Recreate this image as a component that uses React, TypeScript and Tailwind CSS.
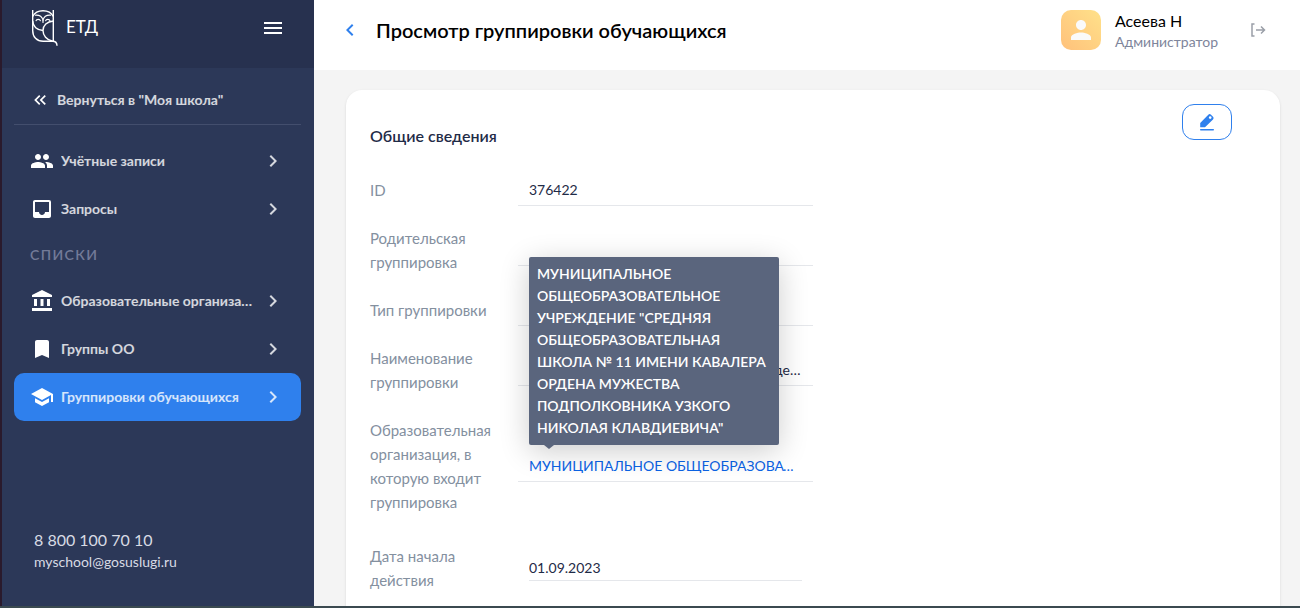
import type { ReactNode } from 'react';
import {
  MdAccountBalance,
  MdBookmark,
  MdInbox,
  MdKeyboardArrowLeft,
  MdKeyboardArrowRight,
  MdKeyboardDoubleArrowLeft,
  MdMenu,
  MdPeople,
  MdPerson,
  MdSchool,
} from 'react-icons/md';

const mainLinks = [
  { label: 'Учётные записи', icon: MdPeople },
  { label: 'Запросы', icon: MdInbox },
];

const listLinks = [
  { label: 'Образовательные организации', icon: MdAccountBalance },
  { label: 'Группы ОО', icon: MdBookmark },
  { label: 'Группировки обучающихся', icon: MdSchool, active: true },
];

const organization =
  'МУНИЦИПАЛЬНОЕ ОБЩЕОБРАЗОВАТЕЛЬНОЕ УЧРЕЖДЕНИЕ "СРЕДНЯЯ ОБЩЕОБРАЗОВАТЕЛЬНАЯ ШКОЛА № 11 ИМЕНИ КАВАЛЕРА ОРДЕНА МУЖЕСТВА ПОДПОЛКОВНИКА УЗКОГО НИКОЛАЯ КЛАВДИЕВИЧА"';

function OwlLogo() {
  return (
    <svg width="28" height="38" viewBox="0 0 28 38" fill="none" stroke="currentColor" strokeWidth="1.4" aria-hidden="true">
      <path d="M1.7 1v20.500c0 6.500 4 10.800 10.500 10.800h9.500c2.600 0 4.300 1.400 4.300 4.500" />
      <path d="M22.300 1v31" />
      <path d="M1.700 7.500C3.500 4 7 1.800 12 1.800S20.500 4 22.300 7.500" />
      <path d="M4 6.200c4-.4 7 1.300 8 4.800 1-3.500 4-5.200 8-4.800" strokeWidth="1.1" />
      <path d="M12 11v3M4.800 12.200c.8-2.400 4-2.400 4.800 0M14.400 12.200c.8-2.400 4-2.400 4.800 0" strokeWidth="1.1" />
      <path d="M1.700 12c.3 5.500 4.300 9.300 10.300 9.500" />
      <path d="M22.300 12C16 12.500 12 16.500 12 21.500c0 5 3.500 9.500 9.700 10.800" />
    </svg>
  );
}

function NavLink({ label, icon: Icon, active }: { label: string; icon: typeof MdPeople; active?: boolean }) {
  return (
    <a
      href="#"
      className={`flex h-12 items-center gap-[7px] rounded-[10px] px-4 text-sm font-bold text-white/80 ${
        active ? 'bg-[#2f80ed]' : ''
      }`}
    >
      <Icon size={24} className="shrink-0 text-white" />
      <span className="min-w-0 flex-1 truncate">{label}</span>
      <MdKeyboardArrowRight size={24} className="shrink-0" />
    </a>
  );
}

function Sidebar() {
  return (
    <aside className="flex w-[314px] shrink-0 flex-col border-l-2 border-[#2a1a2c] bg-[#2c3858] text-white">
      <div className="flex h-[68px] items-start justify-between bg-[#27314f] pr-[29px] pl-[29px]">
        <a href="#" className="flex items-start gap-[7px] pt-[9px]">
          <OwlLogo />
          <span className="pt-2 text-[17px] leading-5">ЕТД</span>
        </a>
        <button type="button" aria-label="Меню" className="mt-4">
          <MdMenu size={24} />
        </button>
      </div>

      <nav className="flex-1 pr-[13px] pl-3">
        <a href="#" className="mb-3 flex h-[57px] items-center gap-[7px] border-b border-[#434e6d] px-4 pt-2 text-sm font-bold text-white/80">
          <MdKeyboardDoubleArrowLeft size={20} className="text-white" />
          Вернуться в "Моя школа"
        </a>
        {mainLinks.map((link) => (
          <NavLink key={link.label} {...link} />
        ))}
        <h2 className="px-4 py-3 text-sm font-semibold tracking-widest text-[#737b98]">СПИСКИ</h2>
        {listLinks.map((link) => (
          <NavLink key={link.label} {...link} />
        ))}
      </nav>

      <address className="flex flex-col px-8 pb-[34px] text-[#d8dbe4] not-italic">
        <a href="tel:88001007010" className="text-base leading-6">8 800 100 70 10</a>
        <a href="mailto:myschool@gosuslugi.ru" className="text-sm">myschool@gosuslugi.ru</a>
      </address>
    </aside>
  );
}

function TopBar() {
  return (
    <header className="flex h-[70px] shrink-0 items-start bg-white pr-8 pl-6">
      <button type="button" aria-label="Назад" className="mt-[18px] text-[#2f80ed]">
        <MdKeyboardArrowLeft size={24} />
      </button>
      <h1 className="mt-4 ml-[14px] flex-1 text-xl leading-7 font-semibold text-black">Просмотр группировки обучающихся</h1>
      <div className="mt-[10px] flex size-10 items-center justify-center rounded-[10px] bg-linear-to-tr from-[#ffc17b] to-[#ffe18a]">
        <MdPerson size={30} className="text-[#fafafa]" />
      </div>
      <div className="mt-[10px] ml-[14px] min-w-[105px]">
        <div className="text-base leading-[21px] text-black">Асеева Н</div>
        <div className="text-sm leading-[21px] text-[#7e859b]">Администратор</div>
      </div>
      <button type="button" aria-label="Выйти" className="mt-[22px] ml-7 text-[#9a9fa8]">
        <svg width="20" height="16" viewBox="0 0 20 16" fill="none" stroke="currentColor" strokeWidth="1.5">
          <path d="M6.500 2H4v12h2.500M8 8h8.500M13 4.500 16.500 8 13 11.500" />
        </svg>
      </button>
    </header>
  );
}

function Field({ label, id, children }: { label: string; id: string; children: ReactNode }) {
  return (
    <div className="flex items-center">
      <label htmlFor={id} className="w-[148px] shrink-0 pr-5 text-[15px] leading-6 text-[#84909f]">
        {label}
      </label>
      {children}
    </div>
  );
}

function TextValue({ id, value }: { id: string; value: string }) {
  return (
    <input
      id={id}
      readOnly
      value={value}
      className="-my-1 h-8 w-[295px] truncate border-b border-[#e5e7eb] px-[11px] text-sm text-[#1f2b47]"
    />
  );
}

export default function App() {
  return (
    <div className="flex h-screen overflow-hidden border-b-2 border-[#3b4a50] bg-[#f4f4f4] font-[Lato,sans-serif]">
      <Sidebar />
      <div className="flex min-w-0 flex-1 flex-col">
        <TopBar />
        <main className="min-h-0 flex-1 overflow-hidden pt-5 pr-5 pl-8">
          <section className="min-h-full rounded-2xl bg-white px-6 pt-[14px] pb-10 shadow-sm">
            <div className="mb-[30px] flex items-start justify-between pr-6">
              <h2 className="mt-5 text-base leading-6 font-semibold text-[#1f2b47]">Общие сведения</h2>
              <button
                type="button"
                aria-label="Редактировать"
                className="flex h-9 w-[50px] items-center justify-center rounded-xl border border-[#2f80ed] text-[#2f80ed]"
              >
                <svg width="16" height="18" viewBox="0 0 16 18" fill="currentColor">
                  <path d="M1.200 10 9.300 1.700a1.900 1.900 0 0 1 2.700 0l2 2a1.900 1.900 0 0 1 0 2.700L6 14.200H1.200z" />
                  <circle cx="11.200" cy="4.600" r="1.300" fill="#fff" />
                  <rect x="1" y="16" width="14" height="1.400" rx=".7" />
                </svg>
              </button>
            </div>

            <div className="flex flex-col gap-6">
              <Field label="ID" id="group-id">
                <TextValue id="group-id" value="376422" />
              </Field>
              <Field label="Родительская группировка" id="parent">
                <TextValue id="parent" value="" />
              </Field>
              <Field label="Тип группировки" id="type">
                <TextValue id="type" value="" />
              </Field>
              <Field label="Наименование группировки" id="name">
                <TextValue id="name" value="Группировка обучающихся в 10 и 2 отделении школы" />
              </Field>
              <Field label="Образовательная организация, в которую входит группировка" id="organization">
                <div className="relative -my-1 h-8 w-[295px] border-b border-[#e5e7eb] pr-[14px] pl-[11px]">
                  <a id="organization" href="#" aria-describedby="organization-tip" className="block truncate text-sm leading-8 text-[#0b63e5]">
                    {organization}
                  </a>
                  <div
                    id="organization-tip"
                    role="tooltip"
                    className="absolute bottom-9 left-[11px] w-[250px] rounded-xs bg-[#5a657d] px-2 py-[6px] text-sm leading-[22px] font-semibold text-white shadow-[0_6px_30px_rgba(0,0,0,0.2)]"
                  >
                    {organization}
                    <span className="absolute top-full left-[15px] border-x-[5px] border-t-4 border-x-transparent border-t-[#5a657d]" />
                  </div>
                </div>
              </Field>
              <div className="pt-[6px]">
                <Field label="Дата начала действия" id="start-date">
                  <input
                    id="start-date"
                    readOnly
                    value="01.09.2023"
                    className="ml-[11px] h-[26px] w-[273px] border-b border-[#e5e7eb] text-sm text-[#1f2b47]"
                  />
                </Field>
              </div>
            </div>
          </section>
        </main>
      </div>
    </div>
  );
}
